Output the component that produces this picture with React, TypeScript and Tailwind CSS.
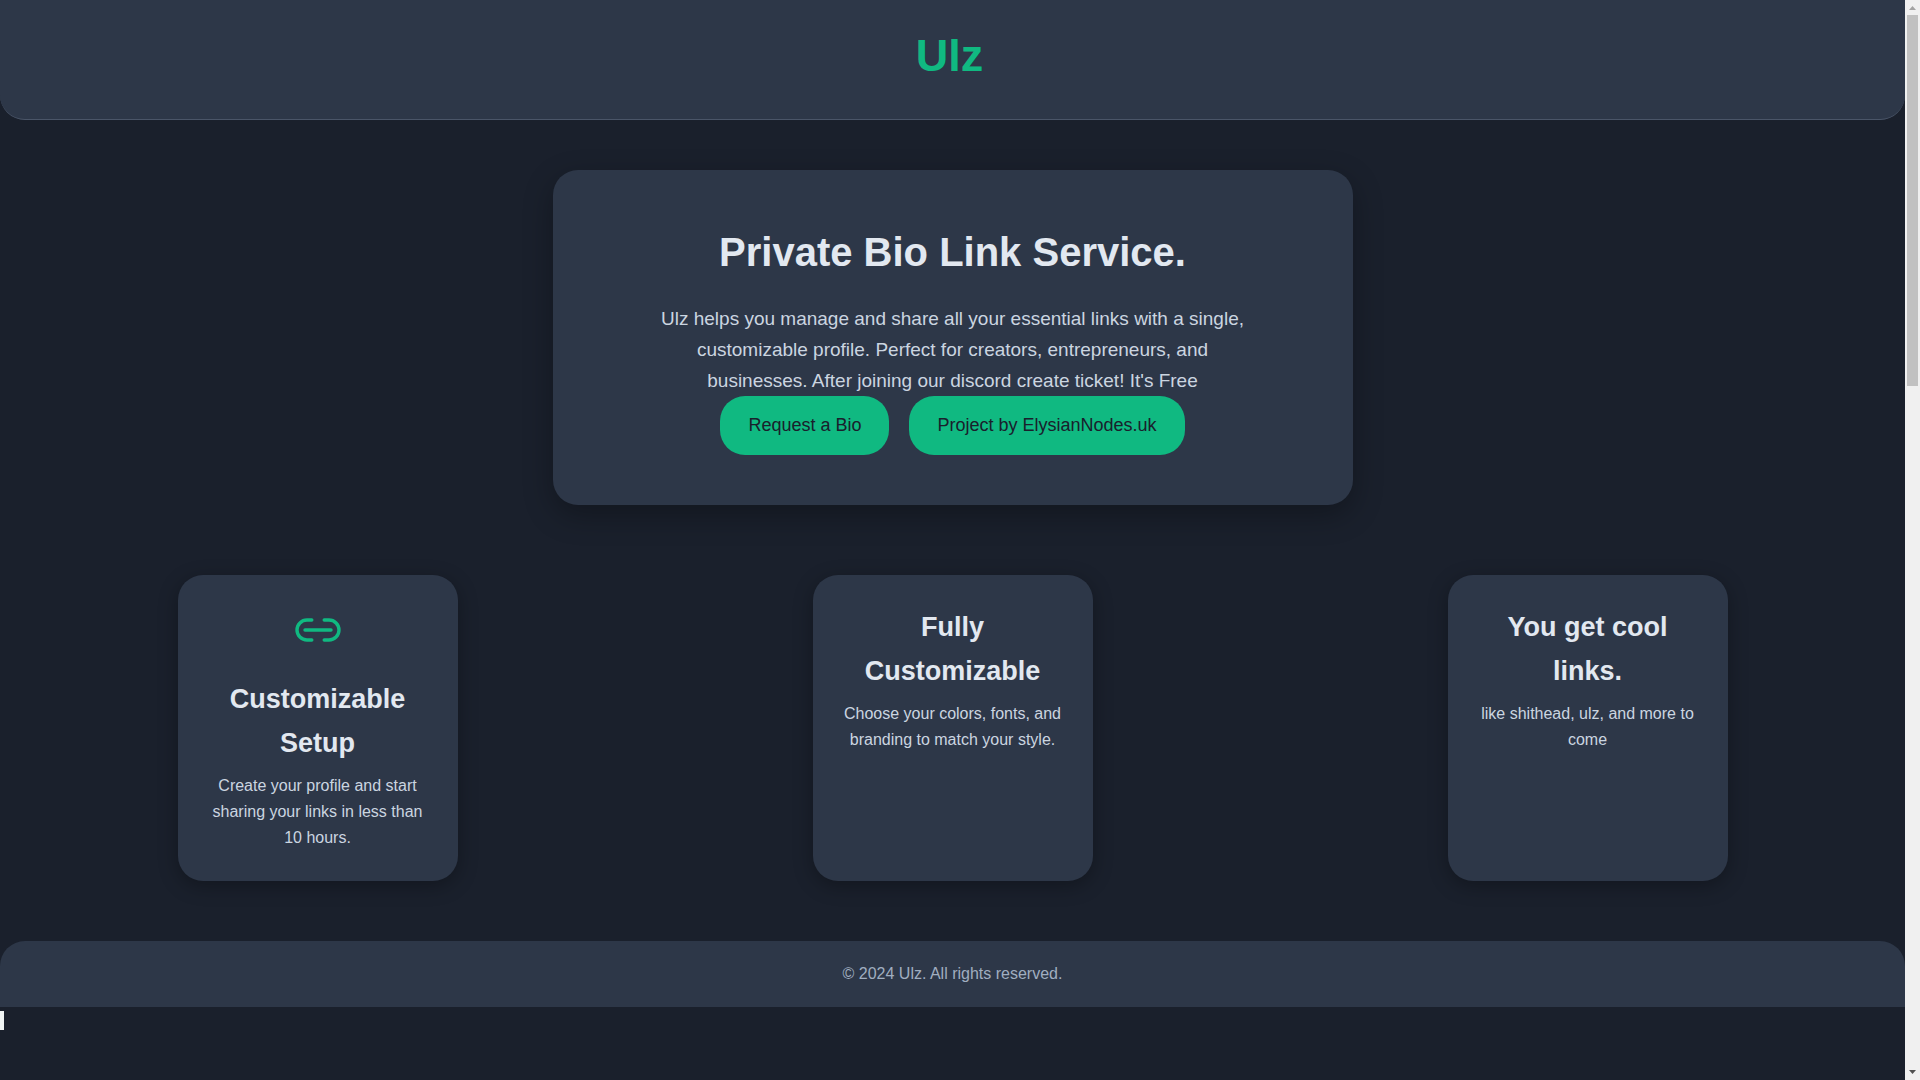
import type { ReactNode } from "react";

type Feature = {
  title: string;
  text: string;
  icon?: ReactNode;
};

function LinkIcon() {
  return (
    <svg
      viewBox="0 0 50 50"
      className="mx-auto mb-[22px] size-[50px] text-[#10b981]"
      fill="none"
      stroke="currentColor"
      strokeWidth="3.4"
      strokeLinecap="round"
      aria-hidden="true"
    >
      <path d="M18.8 35H14a10 10 0 0 1 0-20h4.800" />
      <path d="M31.2 15H36a10 10 0 0 1 0 20h-4.800" />
      <path d="M12 25h26" />
    </svg>
  );
}

const features: Feature[] = [
  {
    title: "Customizable Setup",
    text: "Create your profile and start sharing your links in less than 10 hours.",
    icon: <LinkIcon />,
  },
  {
    title: "Fully Customizable",
    text: "Choose your colors, fonts, and branding to match your style.",
  },
  {
    title: "You get cool links.",
    text: "like shithead, ulz, and more to come",
  },
];

const actions = [
  { label: "Request a Bio", href: "#request" },
  { label: "Project by ElysianNodes.uk", href: "#project" },
];

function FeatureCard({ title, text, icon }: Feature) {
  return (
    <article className="w-[280px] rounded-[25px] bg-[#2d3748] p-[30px] text-center shadow-[0_5px_20px_rgba(0,0,0,0.3)]">
      {icon}
      <h3 className="mb-2 text-[27px] leading-[44px] font-bold text-[#e2e8f0]">
        {title}
      </h3>
      <p className="text-base leading-[26px] text-[#cbd5e0]">{text}</p>
    </article>
  );
}

function ScrollRail() {
  return (
    <div
      className="flex w-[15px] shrink-0 flex-col items-center bg-[#f0f0f0]"
      aria-hidden="true"
    >
      <svg viewBox="0 0 15 15" className="size-[15px] shrink-0" fill="#a3a3a3">
        <path d="M4 10h7L7.500 6z" />
      </svg>
      <div className="h-[371px] w-[11px] bg-[#c1c1c1]" />
      <svg
        viewBox="0 0 15 15"
        className="mt-auto size-[15px] shrink-0"
        fill="#505050"
      >
        <path d="M4 5h7L7.500 9z" />
      </svg>
    </div>
  );
}

export default function App() {
  return (
    <div className="flex h-screen overflow-hidden bg-[#1a202c] font-['Liberation_Sans',Arial,sans-serif]">
      <div className="min-w-0 flex-1 overflow-hidden">
        <header className="rounded-b-[25px] border-b border-[#4a5568] bg-[#2d3748] pt-5 pb-[27px] text-center">
          <a
            href="#home"
            className="inline-block pr-1.5 text-[45px] leading-[72px] font-bold text-[#10b981]"
          >
            Ulz
          </a>
        </header>

        <main>
          <section className="mx-auto mt-[50px] max-w-[800px] rounded-[25px] bg-[#2d3748] px-5 py-[50px] text-center shadow-[0_10px_30px_rgba(0,0,0,0.3)]">
            <h1 className="mb-[19px] text-[40px] leading-[64px] font-bold text-[#e2e8f0]">
              Private Bio Link Service.
            </h1>
            <p className="mx-auto max-w-[600px] text-[19px] leading-[31px] text-[#cbd5e0]">
              Ulz helps you manage and share all your essential links with a
              single, customizable profile. Perfect for creators, entrepreneurs,
              and businesses. After joining our discord create ticket! It's Free
            </p>
            <div className="flex justify-center gap-5">
              {actions.map((action) => (
                <a
                  key={action.href}
                  href={action.href}
                  className="rounded-[25px] bg-[#10b981] px-7 py-[15px] text-[18px] leading-[29px] text-[#1a202c]"
                >
                  {action.label}
                </a>
              ))}
            </div>
          </section>

          <section className="mt-[70px] flex justify-around">
            {features.map((feature) => (
              <FeatureCard key={feature.title} {...feature} />
            ))}
          </section>
        </main>

        <footer className="mt-[60px] rounded-t-[25px] bg-[#2d3748] py-5 text-center text-base leading-[26px] text-[#a0aec0]">
          <p>© 2024 Ulz. All rights reserved.</p>
        </footer>

        <div className="mt-1 h-[19px] w-1 bg-[#f0f4f4]" />
      </div>

      <ScrollRail />
    </div>
  );
}
